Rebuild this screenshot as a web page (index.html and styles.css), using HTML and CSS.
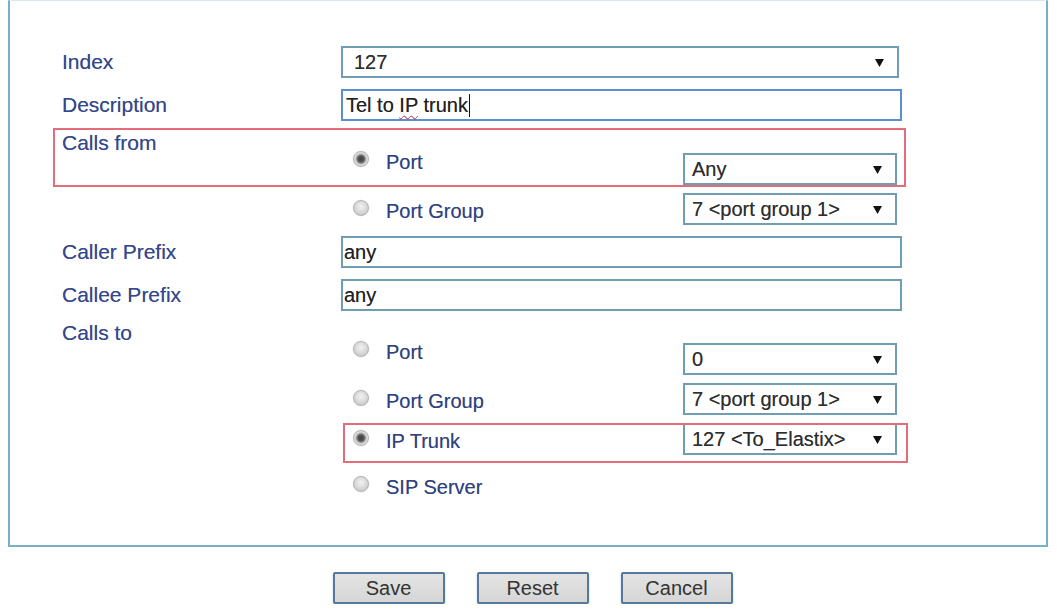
FILE: index.html
```html
<!DOCTYPE html>
<html lang="en">
<head>
    <meta charset="UTF-8">
    <title>Routing Rule | Tel to IP</title>
    <link rel="stylesheet" href="styles.css">
</head>
<body>
    <div class="panel">
        <div class="form">
            <div class="row">
                <div class="label">Index</div>
                <div class="select wide">
                    <span>127</span>
                    <svg class="arrow" width="9" height="9" viewBox="0 0 10 10"><path d="M0 1h10L5 10z"></path></svg>
                </div>
            </div>
            <div class="row">
                <div class="label">Description</div>
                <div class="input focused"><span>Tel to <span class="misspelt">IP</span> trunk</span><span class="caret"></span></div>
            </div>

            <!-- Calls from -->
            <div class="group">
                <div class="row head marked-row">
                    <div class="label">Calls from</div>
                    <div class="option first">
                        <label class="choice"><input type="radio" name="from" checked> Port</label>
                        <div class="select">
                            <span>Any</span>
                            <svg class="arrow" width="9" height="9" viewBox="0 0 10 10"><path d="M0 1h10L5 10z"></path></svg>
                        </div>
                    </div>
                </div>
                <div class="row">
                    <div></div>
                    <div class="option">
                        <label class="choice"><input type="radio" name="from"> Port Group</label>
                        <div class="select">
                            <span>7 &lt;port group 1&gt;</span>
                            <svg class="arrow" width="9" height="9" viewBox="0 0 10 10"><path d="M0 1h10L5 10z"></path></svg>
                        </div>
                    </div>
                </div>
            </div>

            <div class="row">
                <div class="label">Caller Prefix</div>
                <div class="input">any</div>
            </div>
            <div class="row">
                <div class="label">Callee Prefix</div>
                <div class="input">any</div>
            </div>

            <!-- Calls to -->
            <div class="group">
                <div class="row head">
                    <div class="label">Calls to</div>
                    <div class="option first">
                        <label class="choice"><input type="radio" name="to"> Port</label>
                        <div class="select">
                            <span>0</span>
                            <svg class="arrow" width="9" height="9" viewBox="0 0 10 10"><path d="M0 1h10L5 10z"></path></svg>
                        </div>
                    </div>
                </div>
                <div class="row">
                    <div></div>
                    <div class="option">
                        <label class="choice"><input type="radio" name="to"> Port Group</label>
                        <div class="select">
                            <span>7 &lt;port group 1&gt;</span>
                            <svg class="arrow" width="9" height="9" viewBox="0 0 10 10"><path d="M0 1h10L5 10z"></path></svg>
                        </div>
                    </div>
                </div>
                <div class="row">
                    <div></div>
                    <div class="option marked">
                        <label class="choice"><input type="radio" name="to" checked> IP Trunk</label>
                        <div class="select">
                            <span>127 &lt;To_Elastix&gt;</span>
                            <svg class="arrow" width="9" height="9" viewBox="0 0 10 10"><path d="M0 1h10L5 10z"></path></svg>
                        </div>
                    </div>
                </div>
                <div class="row tail">
                    <div></div>
                    <div class="option">
                        <label class="choice"><input type="radio" name="to"> SIP Server</label>
                    </div>
                </div>
            </div>
        </div>
    </div>

    <div class="button-group">
        <button class="btn">Save</button>
        <button class="btn">Reset</button>
        <button class="btn">Cancel</button>
    </div>
</body>
</html>
```

FILE: styles.css
```css
:root {
    --label: #34478a;
    --choice: #30437f;
    --field-border: #6f9db3;
    --focus-border: #5b8fd0;
    --panel-border: #79aec6;
    --mark: #e26c79;
    --text: #2e2e2e;
}

* {
    box-sizing: border-box;
    margin: 0;
    padding: 0;
}

body {
    font-family: 'Liberation Sans', Arial, sans-serif;
    background: #ffffff;
    color: var(--text);
}

.panel {
    margin: 0 9px 0 8px;
    border: 2px solid var(--panel-border);
    border-top: 1px solid #d3e8f1;
    padding: 45px 52px 44px;
}

.form {
    width: 840px;
    display: flex;
    flex-direction: column;
    gap: 11px;
}

.group {
    display: flex;
    flex-direction: column;
    gap: 8px;
}

.row {
    display: grid;
    grid-template-columns: 279px 561px;
    align-items: center;
}

.row.head {
    align-items: start;
}

.row.tail {
    margin-top: 6px;
}

.label {
    font-size: 21px;
    line-height: 28px;
    color: var(--label);
    text-shadow: 0 0 0.6px rgba(52, 71, 138, 0.6);
}

.row.head .label {
    line-height: 22px;
}

.row.head .option {
    margin-top: 21px;
}

.marked-row {
    position: relative;
}

.marked-row::after {
    content: '';
    position: absolute;
    top: -4px;
    left: -9px;
    right: -4px;
    bottom: -2px;
    border: 2px solid var(--mark);
    pointer-events: none;
}

/* text fields */
.input {
    height: 32px;
    border: 2px solid var(--field-border);
    background: #fff;
    font-size: 20px;
    line-height: 28px;
    padding-left: 1px;
    color: #222;
    display: flex;
    align-items: center;
    white-space: pre;
    text-shadow: 0 0 0.5px rgba(0, 0, 0, 0.5);
}

.input.focused {
    border-color: var(--focus-border);
    padding-left: 3px;
}

.misspelt {
    text-decoration: underline wavy #d9534f;
    text-decoration-thickness: 1px;
    text-underline-offset: 3px;
}

.caret {
    width: 1px;
    height: 23px;
    background: #111;
    margin-left: 1px;
}

/* drop-downs */
.select {
    height: 32px;
    border: 2px solid var(--field-border);
    background: #fff;
    font-size: 20px;
    color: var(--text);
    padding: 0 13px 0 7px;
    display: flex;
    align-items: center;
    justify-content: space-between;
    text-shadow: 0 0 0.5px rgba(0, 0, 0, 0.5);
}

.select.wide {
    width: 558px;
    padding-left: 11px;
}

.arrow {
    fill: #111;
    flex-shrink: 0;
}

/* radio options */
.option {
    width: 556px;
    height: 32px;
    display: grid;
    grid-template-columns: 342px 214px;
    align-items: start;
}

.choice {
    height: 24px;
    margin-top: 6px;
    padding-left: 12px;
    display: flex;
    align-items: center;
    gap: 17px;
    font-size: 20px;
    color: var(--choice);
    text-shadow: 0 0 0.6px rgba(48, 67, 127, 0.6);
}

.option.first .choice {
    margin-top: -3px;
}

.choice input {
    -webkit-appearance: none;
    appearance: none;
    width: 16px;
    height: 16px;
    border-radius: 50%;
    border: 1px solid #b4b4b4;
    background: radial-gradient(circle at 50% 40%, #f2f2f2 0, #dcdcdc 45%, #bdbdbd 100%);
    box-shadow: 0 0 1px rgba(0, 0, 0, 0.25);
    align-self: flex-start;
    margin-top: 1px;
    flex-shrink: 0;
}

.choice input:checked {
    background: radial-gradient(circle, #404040 0, #555 3px, #9c9c9c 4.5px, #e0e0e0 6px, #c0c0c0 100%);
}

.option.marked {
    position: relative;
}

.option.marked::after {
    content: '';
    position: absolute;
    top: 0;
    left: 2px;
    right: -11px;
    bottom: -8px;
    border: 2px solid var(--mark);
    pointer-events: none;
}

/* buttons */
.button-group {
    display: flex;
    justify-content: center;
    gap: 32px;
    margin-top: 25px;
    padding-left: 8px;
}

.btn {
    width: 112px;
    height: 32px;
    border: 2px solid #56789b;
    border-radius: 2px;
    background: linear-gradient(#e4e4e4, #d6d6d6);
    box-shadow: 0 1px 2px rgba(0, 0, 0, 0.25);
    font-family: 'Liberation Sans', Arial, sans-serif;
    font-size: 20px;
    color: #333;
}
```
